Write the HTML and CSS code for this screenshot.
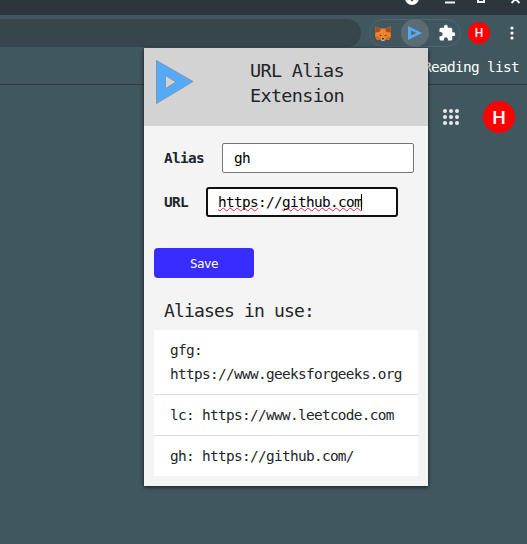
FILE: index.html
```html
<!DOCTYPE html>
<html lang="en">
<head>
<meta charset="utf-8">
<title>URL Alias Extension</title>
<link rel="stylesheet" href="styles.css">
</head>
<body>
<div class="browser">
  <div class="tabstrip">
    <svg width="127" height="15" viewBox="0 0 127 15"><circle cx="12" cy="-2" r="7" fill="#fff"/><path d="M10.500 0h3l-1.500 1.500z" fill="#2b373d"/><path d="M45 2.500h10M77 2h8M84 0v2M78 0v2M111.500 3l7-7M119.500 3l-7-7" fill="none" stroke="#f1f3f4" stroke-width="2"/></svg>
  </div>
  <div class="toolbar">
    <div class="omnibox"></div>
    <div class="extensions">
      <svg class="fox" width="16" height="15" viewBox="0 0 16 15"><path d="M0 0l5.500 2.500h5L16 0l-.5 6 .5 4-2 4-4-.5L8.800 15H7.200L6 13.500 2 14l-2-4 .5-4z" fill="#f0852b"/><path d="M0 0l6 3-1.500 3L.5 6.500zM16 0l-6 3 1.500 3 4 .5z" fill="#a94f19"/><path d="M0 10.500h4l2 3L2 14zM16 10.500h-4l-2 3 4 .5z" fill="#de681c"/><path d="M6 12h4l-.7 3H6.700z" fill="#c8bdb2"/><path d="M3.500 8.500l3 .8-.5 1zM12.500 8.500l-3 .8.500 1zM6.800 12h2.400v1.500H6.800z" fill="#33383c"/></svg>
      <span class="active"><svg width="14" height="14" viewBox="0 0 14 14"><path fill-rule="evenodd" d="M0 0l14 7L0 14zM3 4.500v5L8.500 7z" fill="#55a9f9"/></svg></span>
      <svg class="puzzle" width="18" height="18" viewBox="0 0 24 24"><path fill="#fff" d="M20.500 11H19V7a2 2 0 0 0-2-2h-4V3.500a2.500 2.500 0 0 0-5 0V5H4a2 2 0 0 0-2 2v3.800h1.500a2.700 2.700 0 0 1 0 5.400H2V20c0 1.100.9 2 2 2h3.800v-1.500a2.700 2.700 0 0 1 5.400 0V22H17a2 2 0 0 0 2-2v-4h1.500a2.500 2.500 0 0 0 0-5z"/></svg>
    </div>
    <span class="avatar small">H</span>
    <svg class="kebab" width="4" height="14" viewBox="0 0 4 14" fill="#fff"><circle cx="2" cy="2" r="1.600"/><circle cx="2" cy="7" r="1.600"/><circle cx="2" cy="12" r="1.600"/></svg>
  </div>
  <div class="bookmarks">Reading list</div>
  <div class="page">
    <svg width="16" height="16" viewBox="0 0 16 16" fill="#e8eaed"><circle cx="2" cy="2" r="2"/><circle cx="8" cy="2" r="2"/><circle cx="14" cy="2" r="2"/><circle cx="2" cy="8" r="2"/><circle cx="8" cy="8" r="2"/><circle cx="14" cy="8" r="2"/><circle cx="2" cy="14" r="2"/><circle cx="8" cy="14" r="2"/><circle cx="14" cy="14" r="2"/></svg>
    <span class="avatar">H</span>
  </div>
</div>
<main class="popup">
  <header>
    <svg width="38" height="44" viewBox="0 0 38 44"><path fill-rule="evenodd" d="M.5.500L37 21.500.500 43.500zM9.500 15.500v13L20 22z" fill="#55a9f9" stroke="#7b8ea1" stroke-width=".8"/></svg>
    <h1>URL Alias<br>Extension</h1>
  </header>
  <form>
    <div class="field"><label for="alias">Alias</label><div id="alias" class="input">gh</div></div>
    <div class="field"><label for="url">URL</label><div id="url" class="input focused"><span class="misspelt">https</span>://<span class="misspelt">github.com</span><i class="caret"></i></div></div>
    <button type="button">Save</button>
  </form>
  <h2>Aliases in use:</h2>
  <ul>
    <li>gfg: https://www.geeksforgeeks.org</li>
    <li>lc: https://www.leetcode.com</li>
    <li>gh: https://github.com/</li>
  </ul>
</main>
</body>
</html>
```
FILE: styles.css
```css
* { box-sizing: border-box; }
body {
  margin: 0;
  height: 544px;
  overflow: hidden;
  background: #415760;
  color: #212529;
  font: 14.4px/24px "DejaVu Sans Mono", monospace;
  letter-spacing: -0.67px;
}
.tabstrip { height: 15px; background: #2b373d; padding-left: 400px; }
.tabstrip svg { display: block; }
.toolbar { height: 37px; display: flex; align-items: center; padding-bottom: 1px; }
.omnibox { width: 361px; height: 28px; background: #37464c; border-radius: 0 14px 14px 0; }
.extensions {
  width: 92px; height: 28px; margin-left: 8px; padding-left: 5px;
  display: flex; align-items: center;
  border: 1px solid #50656e; border-radius: 14px;
}
.active {
  width: 28px; height: 28px; margin-left: 10px; padding-right: 1px; flex: none;
  display: flex; align-items: center; justify-content: center;
  background: #5a6d75; border-radius: 50%;
}
.puzzle { margin-left: 9px; flex: none; }
.avatar {
  width: 32px; height: 32px; border-radius: 50%; background: #f00; color: #fff;
  display: flex; align-items: center; justify-content: center;
  font: 500 19px Roboto, sans-serif; letter-spacing: 0;
}
.avatar.small { width: 22px; height: 22px; margin-left: 7px; font-size: 12px; }
.kebab { margin-left: 20px; }
.bookmarks {
  height: 33px; padding: 3px 8px 0 0; text-align: right; color: #fff;
  border-bottom: 1px solid #2e3e44;
}
.page { display: flex; align-items: center; justify-content: flex-end; gap: 24px; padding: 16px 12px 0 0; }
.popup {
  position: absolute; left: 144px; top: 48px; width: 284px; height: 438px;
  background: #f4f4f4; box-shadow: 0 1px 4px rgba(0, 0, 0, .75);
}
header { height: 78px; display: flex; align-items: flex-start; padding: 12px; background: #d3d3d3; }
h1, h2 { margin: 0; font-weight: 400; }
h1 { margin-left: 56px; margin-top: -2px; font-size: 18.5px; line-height: 25px; letter-spacing: -0.7px; }
form { padding: 17px 10px 0; }
.field { display: flex; align-items: center; padding-left: 10px; margin-bottom: 14px; }
label { font-weight: 700; }
.input {
  width: 192px; height: 30px; margin-left: 18px; padding: 2px 11px;
  display: flex; background: #fff; color: #000; border: 1px solid #767676; border-radius: 2px;
}
.input.focused { padding: 1px 10px; border: 2px solid #101010; border-radius: 3px; }
.misspelt { text-decoration: underline wavy #f02040 1px; text-decoration-skip-ink: none; text-underline-offset: 0; }
.caret { width: 1px; height: 16px; margin: 4px 0 0 -1px; background: #000; }
button {
  display: block; width: 100px; height: 30px; margin-top: 31px; padding: 0;
  border: 0; border-radius: 4px; background: #382cff; color: #fff;
  font: 12.5px "DejaVu Sans Mono", monospace; letter-spacing: -0.53px;
}
h2 { margin: 18px 0 0 20px; font-size: 18px; line-height: 30px; letter-spacing: -0.84px; }
ul { margin: 4px 10px 0; padding: 0; list-style: none; background: #fff; }
li { padding: 8px 14px 8px 16px; border-bottom: 1px solid #dcdcdc; }
li:last-child { border-bottom: 0; }
```
